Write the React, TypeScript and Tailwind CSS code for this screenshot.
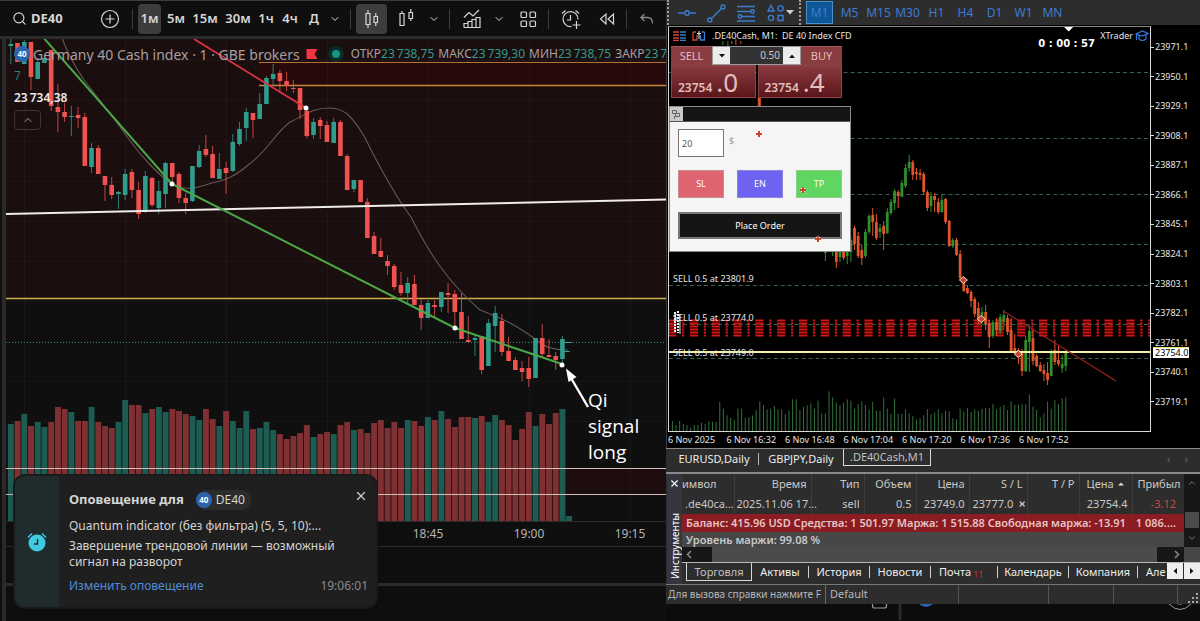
import React from "react";
import { ChevronDown, ChevronUp, Search, X } from "lucide-react";

type Candle = [number, number, number, number, number];

// [up, high, body top, body bottom, low]
const dayCandles: Candle[] = [
  [1, 38, 44, 46, 64], [0, 43, 43, 62, 62], [1, 40, 42, 64, 64], [0, 42, 42, 77, 90], [1, 58, 62, 79, 79],
  [1, 55, 58, 63, 63], [0, 50, 50, 106, 111], [0, 84, 107, 112, 132], [0, 103, 112, 117, 122], [1, 106, 116, 117, 136],
  [0, 107, 115, 118, 128], [0, 113, 117, 166, 166], [1, 143, 148, 167, 173], [0, 145, 148, 174, 174], [0, 176, 176, 185, 201],
  [0, 177, 185, 195, 199], [1, 191, 192, 194, 209], [1, 169, 174, 195, 200], [0, 169, 172, 190, 198], [0, 182, 190, 214, 219],
  [1, 171, 176, 211, 213], [0, 177, 178, 205, 207], [1, 181, 191, 208, 214], [1, 162, 163, 194, 208], [0, 163, 163, 177, 183],
  [0, 172, 174, 198, 203], [0, 193, 198, 203, 214], [1, 166, 166, 201, 202], [1, 145, 151, 167, 168], [0, 135, 149, 155, 157],
  [0, 146, 154, 178, 178], [1, 153, 169, 179, 179], [0, 162, 168, 173, 194], [1, 134, 142, 171, 172], [1, 122, 129, 144, 146],
  [1, 108, 112, 128, 141], [0, 113, 113, 120, 138], [1, 93, 104, 119, 119], [1, 76, 78, 104, 104], [1, 64, 74, 79, 86],
  [0, 70, 73, 81, 93], [0, 72, 81, 86, 91], [0, 80, 88, 89, 93], [0, 88, 88, 110, 119], [0, 108, 111, 136, 138],
  [1, 118, 122, 135, 139], [0, 117, 120, 126, 139], [0, 121, 125, 142, 142], [1, 118, 122, 143, 143], [0, 120, 122, 156, 156],
  [0, 154, 156, 190, 190], [1, 180, 180, 189, 192], [0, 180, 180, 202, 202], [0, 198, 202, 238, 238], [0, 232, 236, 254, 254],
  [0, 238, 251, 257, 257], [0, 255, 261, 266, 275], [0, 264, 266, 287, 290], [0, 272, 285, 293, 296], [1, 277, 283, 293, 304],
  [0, 275, 284, 305, 305], [0, 299, 305, 318, 330], [1, 300, 303, 318, 318], [0, 300, 305, 307, 317], [1, 292, 292, 307, 312],
  [0, 283, 293, 295, 313], [0, 290, 294, 312, 327], [0, 293, 312, 339, 339], [0, 316, 340, 342, 342], [1, 335, 338, 340, 356],
  [0, 336, 336, 370, 374], [1, 319, 323, 366, 366], [1, 306, 313, 326, 352], [0, 314, 321, 352, 356], [0, 337, 351, 361, 361],
  [0, 357, 360, 370, 370], [0, 361, 368, 372, 381], [0, 357, 368, 379, 387], [1, 338, 338, 378, 378], [0, 324, 338, 354, 357],
  [0, 339, 355, 357, 357], [0, 352, 356, 360, 370], [1, 336, 339, 359, 365],
];

const dayVolumes = [
  424, 421, 414, 426, 422, 427, 422, 407, 409, 412, 421, 421, 407, 422, 426, 428, 422, 400, 405, 405, 413, 409, 407, 412,
  409, 411, 414, 416, 420, 409, 419, 426, 411, 421, 428, 411, 429, 428, 422, 430, 434, 439, 436, 433, 425, 437, 434, 432,
  434, 425, 422, 430, 429, 433, 423, 420, 428, 422, 428, 420, 421, 426, 417, 420, 411, 419, 427, 417, 417, 418, 416, 422,
  415, 420, 425, 440, 429, 412, 426, 414, 424, 413, 409,
];

const terminalStart = 42;
const terminalCandles: Candle[] = [
  [1, 235, 240, 253, 261], [0, 230, 240, 250, 252], [1, 236, 240, 252, 256], [0, 240, 250, 262, 268], [1, 235, 245, 257, 262],
  [0, 235, 240, 258, 260], [1, 235, 240, 256, 264], [1, 236, 240, 252, 262], [0, 226, 228, 244, 250], [0, 232, 236, 256, 258],
  [0, 245, 250, 258, 265], [1, 229, 232, 256, 258], [1, 214, 216, 232, 234], [0, 208, 215, 222, 236], [0, 214, 222, 238, 240],
  [1, 224, 228, 232, 238], [0, 221, 226, 234, 250], [1, 208, 212, 233, 234], [1, 199, 202, 213, 215], [1, 189, 191, 203, 210],
  [0, 190, 192, 196, 208], [1, 180, 183, 197, 197], [1, 164, 168, 186, 188], [1, 155, 162, 168, 172], [0, 160, 162, 175, 180],
  [0, 168, 172, 174, 180], [0, 169, 173, 175, 180], [0, 172, 174, 192, 195], [0, 190, 192, 208, 211], [1, 192, 196, 206, 212],
  [0, 193, 196, 200, 212], [0, 198, 202, 212, 214], [1, 194, 200, 212, 213], [0, 198, 199, 222, 224], [0, 220, 221, 246, 247],
  [1, 238, 240, 246, 248], [0, 238, 240, 255, 256], [0, 250, 254, 278, 280], [0, 278, 280, 291, 292], [0, 285, 288, 293, 294],
  [0, 290, 292, 301, 307], [0, 297, 299, 314, 317], [0, 302, 308, 320, 324], [1, 307, 312, 320, 326], [0, 305, 312, 324, 330],
  [0, 320, 323, 337, 348], [1, 320, 322, 336, 338], [0, 318, 322, 330, 336], [1, 314, 317, 331, 334], [1, 310, 315, 322, 330],
  [0, 315, 318, 332, 335], [0, 318, 330, 352, 353], [0, 334, 348, 352, 354], [0, 348, 350, 357, 364], [0, 349, 352, 371, 376],
  [1, 336, 340, 371, 372], [1, 325, 331, 342, 372], [0, 330, 338, 361, 365], [0, 354, 356, 366, 367], [0, 362, 365, 371, 372],
  [0, 364, 370, 374, 381], [0, 362, 373, 380, 385], [1, 349, 351, 376, 376], [0, 340, 350, 362, 365], [0, 346, 360, 364, 366],
  [1, 355, 364, 368, 373], [1, 350, 352, 366, 371],
];

const terminalVolumes = [
  30, 18, 30, 21, 18, 10, 18, 18, 25, 21, 29, 28, 27, 87, 67, 47, 40, 34, 67, 67, 39, 42, 47, 63, 89, 78, 65, 67, 75, 65,
  65, 51, 61, 95, 95, 63, 73, 77, 83, 67, 91, 53, 53, 119, 101, 85, 78, 85, 95, 91, 67, 81, 89, 78, 65, 87, 61, 61, 100,
  67, 51, 97, 51, 51, 65, 53, 45, 35, 38, 47, 65, 51, 55, 65, 53, 61, 59, 38, 35, 67, 59, 69, 57, 65, 61, 67, 69, 69, 81,
  65, 73, 78, 63, 89, 78, 78, 80, 80, 110, 73, 63, 41, 53, 88, 67, 92, 81, 99, 100,
];

const prices = [
  "23971.1", "23950.1", "23929.1", "23908.1", "23887.1", "23866.1", "23845.1",
  "23824.1", "23803.1", "23782.1", "23761.1", "23740.1", "23719.1",
];
const terminalTimes = ["6 Nov 2025", "6 Nov 16:32", "6 Nov 16:48", "6 Nov 17:04", "6 Nov 17:20", "6 Nov 17:36", "6 Nov 17:52"];
const intervals = [
  { name: "5м", width: "w-6" },
  { name: "15м", width: "w-[34px]" },
  { name: "30м", width: "w-8" },
  { name: "1ч", width: "w-6" },
  { name: "4ч", width: "w-6" },
  { name: "Д", width: "w-6" },
];
const periods = ["M5", "M15", "M30", "H1", "H4", "D1", "W1", "MN"];
// thin space between the thousands
const ohlc = [
  ["ОТКР", "23\u2009738,75"],
  ["МАКС", "23\u2009739,30"],
  ["МИН", "23\u2009738,75"],
  ["ЗАКР", "23\u2009739"],
];

const Divider = () => <span className="h-5 w-px shrink-0 bg-[#3d3d3d]" />;

const ToolButton = ({ label, className = "", children }: { label: string; className?: string; children: React.ReactNode }) => (
  <button aria-label={label} className={`flex h-[30px] shrink-0 items-center justify-center rounded ${className}`}>
    {children}
  </button>
);

const LeftToolbar = () => (
  <header className="flex h-[39px] shrink-0 items-center overflow-hidden border-t border-b-3 border-t-[#3c3c3c] border-b-[#2c2c2c] bg-[#0f0f0f] text-[13px] text-[#d6d6d6]">
    <button className="ml-3 flex w-[88px] shrink-0 items-center gap-1 font-bold">
      <Search size={15} strokeWidth={1.8} />
      DE40
    </button>
    <ToolButton label="Добавить символ" className="w-5">
      <svg width="20" height="20" viewBox="0 0 20 20" fill="none" stroke="currentColor" strokeWidth="1.2">
        <circle cx="10" cy="10" r="8.5" />
        <path d="M10 5.5v9M5.5 10h9" />
      </svg>
    </ToolButton>
    <span className="w-3 shrink-0" />
    <Divider />
    <button className="ml-[5px] h-[30px] w-[23px] shrink-0 rounded bg-[#3d3d3d] font-semibold">1м</button>
    <div className="ml-[3px] flex shrink-0 font-semibold">
      {intervals.map(({ name, width }) => (
        <button key={name} className={`shrink-0 ${width}`}>
          {name}
        </button>
      ))}
    </div>
    <ToolButton label="Интервалы" className="ml-[2px] w-[14px]">
      <ChevronDown size={12} />
    </ToolButton>
    <span className="w-2 shrink-0" />
    <Divider />
    <ToolButton label="Свечи" className="ml-[5px] w-[31px] bg-[#3d3d3d]">
      <svg width="20" height="22" viewBox="0 0 20 22" fill="none" stroke="currentColor" strokeWidth="1.2">
        <path d="M4 5.5h4v11H4zM6 2v3.5M6 16.5V20M12 8.5h3.5v6H12zM13.8 5v3.5M13.8 14.5V18" />
      </svg>
    </ToolButton>
    <ToolButton label="Тип графика" className="ml-2 w-6">
      <svg width="20" height="22" viewBox="0 0 20 22" fill="none" stroke="currentColor" strokeWidth="1.2">
        <path d="M3 5.5h4v12H3zM5 3v2.5M12 4.5h3.5v6H12zM13.8 1v3.5M13.8 10.5V13" />
      </svg>
    </ToolButton>
    <ToolButton label="Ещё типы" className="ml-2 w-[14px]">
      <ChevronDown size={12} />
    </ToolButton>
    <span className="w-2 shrink-0" />
    <Divider />
    <ToolButton label="Индикаторы" className="ml-3 w-5">
      <svg width="20" height="22" viewBox="0 0 20 22" fill="none" stroke="currentColor" strokeWidth="1.2">
        <path d="M2 19.5h16v-10h-4v10M10 19.5v-6H6v6M2 19.5v-4h4M10 13.5v-2h4M2 9.5l5-5 4 3.5 6-6" />
      </svg>
    </ToolButton>
    <ToolButton label="Шаблоны" className="ml-[10px] w-[14px]">
      <ChevronDown size={12} />
    </ToolButton>
    <ToolButton label="Раскладка" className="ml-3 w-5">
      <svg width="18" height="18" viewBox="0 0 18 18" fill="none" stroke="currentColor" strokeWidth="1.2">
        <rect x="2" y="2" width="5.5" height="5.5" rx="1" />
        <rect x="11" y="2" width="5.5" height="5.5" rx="1" />
        <rect x="2" y="11" width="5.5" height="5.5" rx="1" />
        <rect x="11" y="11" width="5.5" height="5.5" rx="1" />
      </svg>
    </ToolButton>
    <span className="w-[10px] shrink-0" />
    <Divider />
    <ToolButton label="Оповещение" className="ml-3 w-5">
      <svg width="20" height="22" viewBox="0 0 20 22" fill="none" stroke="currentColor" strokeWidth="1.2">
        <path d="M10.5 18.5A7.5 7.5 0 1 1 17 11.5M9.5 7v5H6M1 5.5L4.5 2.5M14.5 2.5l3.5 3M15.5 13v8M11.5 17h8" />
      </svg>
    </ToolButton>
    <ToolButton label="Повтор" className="ml-4 w-5">
      <svg width="18" height="16" viewBox="0 0 18 16" fill="none" stroke="currentColor" strokeWidth="1.2">
        <path d="M8 3v10L2.5 8zM15.5 3v10L10 8z" />
      </svg>
    </ToolButton>
    <span className="w-[9px] shrink-0" />
    <Divider />
    <ToolButton label="Отменить" className="ml-[10px] w-5 text-[#8a8a8a]">
      <svg width="16" height="14" viewBox="0 0 16 14" fill="none" stroke="currentColor" strokeWidth="1.3">
        <path d="M5.5 2L2 5.5 5.5 9M2 5.5h6.5c3.5 0 5 2 5 6" />
      </svg>
    </ToolButton>
  </header>
);

const DayChart = () => (
  <svg className="block h-[482px] w-full" viewBox="6 39 660 482" preserveAspectRatio="none">
    <rect x="6" y="39" width="660" height="259" fill="#1b0e0f" />
    <rect x="6" y="468" width="660" height="26" fill="#1d0d0e" />
    <rect x="260" y="62" width="406" height="23" fill="#260a0b" />
    {[24, 125, 226, 327, 428, 529, 630].map((x) => (
      <path key={x} d={`M${x}.5 39V521`} stroke="#ffffff" strokeOpacity="0.03" />
    ))}
    {[60, 100, 141, 181, 221, 261, 301, 341, 381, 421].map((y) => (
      <path key={y} d={`M6 ${y}.5H666`} stroke="#ffffff" strokeOpacity="0.03" />
    ))}
    {dayVolumes.map((top, i) => (
      <rect key={i} x={7.9 + i * 6.727} y={top} width="5.9" height={521 - top} fill={dayCandles[i][0] ? "#1d5c52" : "#7f3033"} />
    ))}
    <rect x="566" y="516" width="6" height="5" fill="#1d5c52" />
    <path d="M6 468.5H666M6 494.5H666" stroke="#d3bdb9" />
    <path d="M259 62.5H666" stroke="#b5722f" />
    <path d="M259 85.5H666" stroke="#c9843c" strokeWidth="1.4" />
    <path d="M6 298.5H666" stroke="#d2b04c" strokeWidth="1.4" />
    <path d="M6 342.5H666" stroke="#3d7d74" strokeDasharray="1 2" />
    <path
      d="M62 38C68 55 76 68 84 80C100 101 116 120 128 138C142 158 160 176 172 184C186 192 200 187 212 183C226 180 236 176 248 165C266 153 276 132 290 122C304 116 312 108 328 108C346 107 354 120 364 136C380 168 396 197 411 217C420 235 430 252 439 265C452 283 466 298 480 310C500 318 512 322 535 339C545 347 552 350 568 350"
      fill="none"
      stroke="#6b5557"
      strokeWidth="1.1"
    />
    {dayCandles.map(([up, high, top, bottom, low], i) => {
      const x = 10.8 + i * 6.727;
      const color = up ? "#2f9c8c" : "#ef5350";
      return (
        <g key={i} fill={color}>
          <rect x={x - 0.5} y={high} width="1" height={low - high} opacity="0.8" />
          <rect x={x - 2.3} y={top} width="4.6" height={bottom - top} />
        </g>
      );
    })}
    <path d="M6 214L666 199.5" stroke="#f1ecec" strokeWidth="2" />
    <path d="M194 39L306 108" stroke="#d93545" strokeWidth="1.8" />
    <path d="M42 36L172 184L455 328L562 364" fill="none" stroke="#4aa845" strokeWidth="2" />
    <path d="M564 351.5h6M564 342.5h8" stroke="#2f9c8c" />
    {[[172, 184], [306, 108], [455, 328], [562, 365]].map(([x, y]) => (
      <circle key={x} cx={x} cy={y} r="2.5" fill="#fff" />
    ))}
    <path d="M588 407L571 378" stroke="#fff" strokeWidth="2.4" />
    <path d="M566 368.5L576.5 377L568.5 382z" fill="#fff" />
  </svg>
);

const SymbolBadge = () => (
  <span className="flex size-4 shrink-0 items-center justify-center rounded-full bg-[#2b63ad] text-[8px] font-bold text-white">40</span>
);

const ChartLegend = () => (
  <div className="absolute inset-x-0 top-0 overflow-hidden pt-[7px] pl-2 text-[#a89fa0]">
    <div className="flex h-4 items-center whitespace-nowrap">
      <SymbolBadge />
      <h1 className="ml-[3px] text-[14px]">Germany 40 Cash index · 1 · GBE brokers</h1>
      <svg className="ml-[6px] shrink-0" width="12" height="12" viewBox="0 0 12 12">
        <path d="M0.5 1h11L8.5 6l3 5h-11z" fill="#f23645" />
      </svg>
      <span className="ml-[10px] flex size-4 shrink-0 items-center justify-center rounded-full bg-[#0c2a26]">
        <span className="size-2 rounded-full bg-[#11967f]" />
      </span>
      <div className="ml-[7px] flex gap-1 text-[12px]">
        {ohlc.map(([name, value]) => (
          <span key={name}>
            {name}
            <span className="text-[#2f9c8c]">{value}</span>
          </span>
        ))}
      </div>
    </div>
    <p className="mt-[6px] text-[12px] leading-4 text-[#2f7f76]">7</p>
    <p className="mt-[6px] text-[12px] leading-4 font-semibold text-[#eceaea]">{"23\u2009734,38"}</p>
    <button aria-label="Свернуть" className="mt-1 flex h-5 w-[27px] items-center justify-center rounded-sm border border-[#3f3536]">
      <ChevronUp size={12} />
    </button>
  </div>
);

const AlertToast = () => (
  <section className="absolute top-[474px] left-[13px] flex h-[135px] w-[365px] overflow-hidden rounded-xl border-2 border-[#1a1a1a] bg-[#1f1f1f] text-[#d4d4d4] shadow-lg">
    <div className="flex w-11 shrink-0 items-center justify-center bg-[#1f2b2d]">
      <svg width="22" height="22" viewBox="0 0 22 22">
        <circle cx="11" cy="12" r="8.5" fill="#3ecbe0" />
        <path d="M2 6.5L6 2.5M20 6.5L16 2.5" stroke="#3ecbe0" strokeWidth="1.5" />
        <path d="M11.5 8v5H8" fill="none" stroke="#1f2b2d" strokeWidth="1.4" />
      </svg>
    </div>
    <div className="flex min-w-0 flex-1 flex-col pt-[14px] pr-2 pl-[10px] text-[12px]">
      <div className="flex h-5 items-center">
        <h2 className="text-[13px] font-bold">Оповещение для</h2>
        <span className="ml-3 flex h-5 items-center gap-1 rounded-full bg-[#2c2c2c] pr-[6px]">
          <SymbolBadge />
          DE40
        </span>
        <button aria-label="Закрыть" className="mb-2 ml-auto">
          <X size={14} />
        </button>
      </div>
      <p className="mt-2 leading-4 whitespace-nowrap">Quantum indicator (без фильтра) (5, 5, 10):...</p>
      <p className="mt-1 leading-4">
        Завершение трендовой линии — возможный сигнал на разворот
      </p>
      <div className="mt-2 flex justify-between leading-4">
        <a href="#alert" className="text-[#4f8bd8]">Изменить оповещение</a>
        <time className="text-[#8a8a8a]">19:06:01</time>
      </div>
    </div>
  </section>
);

const LeftPanel = () => (
  <main className="relative flex min-h-screen w-[55.5%] shrink-0 flex-col bg-[#0f0f0f]">
    <LeftToolbar />
    <div className="ml-[2px] flex flex-1 flex-col border-l-4 border-[#2a2a2a]">
      <div className="relative overflow-hidden">
        <DayChart />
        <ChartLegend />
        <p className="absolute top-[348px] left-[582px] w-16 font-['Open_Sans',sans-serif] text-[19px] leading-[26px] font-medium text-white">
          Qi signal long
        </p>
      </div>
      <div className="flex h-[26px] items-center justify-end gap-[61px] border-y border-[#2b2b2b] pr-4 text-[12px] text-[#b4b4b4]">
        {["18:45", "19:00", "19:15"].map((time) => (
          <time key={time} className="w-10 text-center">{time}</time>
        ))}
      </div>
      <div className="h-[39px] border-b-3 border-[#2c2c2c]" />
      <div className="flex-1" />
    </div>
    <AlertToast />
  </main>
);

const TerminalToolbar = () => (
  <header className="flex h-[25px] shrink-0 items-center overflow-hidden bg-[#2d2d2d] text-[12px] text-[#3d7bd0]">
    <span className="ml-px h-full w-px shrink-0 border-l-2 border-dotted border-[#a0a0a0]" />
    <div className="flex w-[130px] shrink-0 items-center gap-[11px] pl-[9px]">
      <button aria-label="Горизонтальная линия">
        <svg width="18" height="20" viewBox="0 0 18 20" fill="none" stroke="currentColor" strokeWidth="1.4">
          <path d="M0 10h6M12 10h6" />
          <circle cx="9" cy="10" r="2.2" />
        </svg>
      </button>
      <button aria-label="Трендовая линия">
        <svg width="19" height="20" viewBox="0 0 19 20" fill="none" stroke="currentColor" strokeWidth="1.4">
          <path d="M4 16L15 5" />
          <circle cx="2.8" cy="17" r="2" />
          <circle cx="16" cy="4" r="2" />
        </svg>
      </button>
      <button aria-label="Уровни Фибоначчи">
        <svg width="19" height="20" viewBox="0 0 19 20" fill="none" stroke="currentColor" strokeWidth="1.4">
          <path d="M0 3.5h18M0 8.5h14M5 13.5h13M0 18h18" />
          <circle cx="15.5" cy="8.5" r="1.7" />
          <circle cx="3" cy="13.5" r="1.7" />
        </svg>
      </button>
      <button aria-label="Фигуры" className="flex items-center gap-px">
        <svg width="18" height="20" viewBox="0 0 18 20" fill="none" stroke="currentColor" strokeWidth="1.4">
          <path d="M1 8l3-5.5L7 8zM11 12.5h5v5h-5z" />
          <circle cx="13.5" cy="5.5" r="2.6" />
          <circle cx="4" cy="15" r="2.6" />
        </svg>
        <svg width="8" height="5" viewBox="0 0 8 5">
          <path d="M0 0h8L4 4.5z" fill="#d0d0d0" />
        </svg>
      </button>
    </div>
    <span className="h-full w-px shrink-0 border-l-2 border-dotted border-[#a0a0a0]" />
    <button className="ml-[5px] h-[23px] w-[27px] shrink-0 border border-[#4a90c8] bg-[#0d5796]">M1</button>
    <div className="flex shrink-0 pl-[2px]">
      {periods.map((item) => (
        <button key={item} className="w-[29px] text-center">{item}</button>
      ))}
    </div>
  </header>
);

const TerminalSvg = () => (
  <svg className="block h-full w-full" viewBox="669 27 482 404" preserveAspectRatio="none">
    {[72, 138, 194, 244, 285, 324, 358].map((y) => (
      <path key={y} d={`M669 ${y}.5H1151`} stroke="#39634f" strokeDasharray="4 3" />
    ))}
    {[320, 323, 326, 329, 332, 335].map((y) => (
      <path key={y} d={`M668 ${y}.5H1151`} stroke="#d81414" strokeWidth="2.2" strokeDasharray="8.3 5.7 2.3 5.57" />
    ))}
    {terminalVolumes.map((height, i) => (
      <rect key={i} x={671.9 + i * 3.65} y={431 - height / 3} width="1" height={height / 3} fill="#34703a" />
    ))}
    {terminalCandles.map(([up, high, top, bottom, low], i) => {
      const x = 672.4 + (i + terminalStart) * 3.65;
      return (
        <g key={i} fill={up ? "#2f8f2c" : "#e2552a"}>
          <rect x={x - 0.5} y={high} width="1" height={low - high} />
          <rect x={x - 1.4} y={top} width="2.8" height={bottom - top} />
        </g>
      );
    })}
    <path d="M669 352H1151" stroke="#f4f0a0" strokeWidth="2" />
    <path d="M1004 311L1117 381" stroke="#9c2020" strokeWidth="1.2" />
    {[[964, 280], [982, 319], [1019, 354]].map(([x, y]) => (
      <path key={x} d={`M${x - 4} ${y}l4 -3.5l4 3.5l-4 3.5z`} fill="#c7452c" stroke="#f2d9cf" />
    ))}
    <path d="M1065 27h9l-4.5 4.5z" fill="#fff" />
    <path d="M723 45v-4M728 46v-5" stroke="#2f8f2c" />
    <path d="M732 44v-3M736 45v-6M741 44v-3" stroke="#e2552a" />
    <rect x="758" y="98" width="3" height="8" fill="#e2552a" />
    <path d="M675 312v20M678 311v22" stroke="#f0f0f0" strokeWidth="2" strokeDasharray="2 1" />
    <path d="M680 314v20" stroke="#f0f0f0" />
  </svg>
);

const QuickTrade = () => (
  <div className="absolute top-[19px] left-[2px] w-[171px] text-[#e3bcbc]">
    <div className="flex h-[19px]">
      <button className="w-[41px] border-t border-[#a25a5e] bg-[#8a3c40] text-[11px] leading-4">SELL</button>
      <div className="flex h-[19px] flex-1 items-stretch border border-[#9a9a9a] bg-[#333]">
        <button aria-label="Уменьшить" className="flex w-[17px] items-center justify-center bg-[#ececec]">
          <svg width="6" height="4" viewBox="0 0 6 4"><path d="M0 0h6L3 3.5z" fill="#111" /></svg>
        </button>
        <input aria-label="Объем" defaultValue="0.50" className="w-0 min-w-0 flex-1 pr-[3px] text-right text-[10px] text-[#c9c9c9]" />
        <button aria-label="Увеличить" className="flex w-[17px] items-center justify-center bg-[#ececec]">
          <svg width="6" height="4" viewBox="0 0 6 4"><path d="M0 4h6L3 0.5z" fill="#111" /></svg>
        </button>
      </div>
      <button className="w-[41px] border-t border-[#a25a5e] bg-[#8a3c40] text-[11px] leading-4">BUY</button>
    </div>
    <div className="flex h-[33px] gap-[2px]">
      {["0", "4"].map((digit) => (
        <button key={digit} className="flex flex-1 items-baseline border border-[#8d4448] bg-linear-to-b from-[#8a3a3f] to-[#5b161a] pl-[6px] leading-none">
          <span className="text-[12px] font-semibold">23754</span>
          <span className="ml-1 text-[26px] leading-8">.{digit}</span>
        </button>
      ))}
    </div>
  </div>
);

const OrderForm = () => (
  <form className="absolute top-[79px] left-0 w-[182px] border border-[#8a8a8a] bg-[#f5f5f5] font-['Noto_Sans',sans-serif] text-[9px]">
    <div className="h-[15px] border-b border-[#555] bg-[#151515]">
      <svg width="13" height="14" viewBox="0 0 13 14">
        <rect x="0" y="0" width="13" height="14" fill="#c9c9c9" />
        <path d="M2.5 3.500h4v3h-4zM5.500 6.500h4v3h-4zM4.500 9v3" fill="none" stroke="#666" />
      </svg>
    </div>
    <div className="px-2 pt-[7px] pb-3">
      <label className="flex items-start gap-[5px] text-[#9a9a9a]">
        <input aria-label="Риск" defaultValue="20" className="h-7 w-[46px] border border-[#777] bg-white pl-[3px] text-[#555]" />
        <span className="pt-[5px]">$</span>
      </label>
      <div className="mt-[13px] flex justify-between text-white">
        <button type="button" className="h-7 w-[46px] border border-[#c98a90] bg-[#dd6470]">SL</button>
        <button type="button" className="h-7 w-[46px] border border-[#8a86d8] bg-[#6e62f0]">EN</button>
        <button type="button" className="h-7 w-[46px] border border-[#8ad08a] bg-[#5fd562]">TP</button>
      </div>
      <button type="button" className="mt-[14px] h-[27px] w-full border-2 border-[#777] bg-[#151515] text-white">Place Order</button>
    </div>
  </form>
);

const markers = ["top-[103px] left-[86px]", "top-[159px] left-[130px]", "top-[208px] left-[145px]"];

const TerminalChart = () => (
  <section className="flex h-[423px] flex-col border-l border-[#3a3a3a] bg-black pt-px pl-px font-['Noto_Sans',sans-serif] text-[9px] text-[#e6e6e6]">
    <div className="flex h-[406px]">
      <div className="relative min-w-0 flex-1 border border-[#d8d8d8] border-t-[#8c8c8c]">
        <TerminalSvg />
        <div className="absolute inset-x-0 top-[3px] flex items-center pr-px pl-1 leading-3 whitespace-nowrap">
          <svg width="33" height="10" viewBox="0 0 33 10" fill="none">
            <path d="M0 1h6M0 4h6M0 7h6M0 9.5h6" stroke="#d0443c" strokeWidth="1.5" />
            <path d="M7 1h6M7 4h6M7 7h6M7 9.5h6" stroke="#3d7bd0" strokeWidth="1.5" />
            <path d="M20 1v8h4V4M20 1h3" stroke="#d0443c" strokeWidth="1.3" />
            <path d="M31.5 1v8h-4V4M31.5 1h-3" stroke="#3d7bd0" strokeWidth="1.3" />
            <path d="M24 2.5h4M26 0v8" stroke="#eee" />
          </svg>
          <h2 className="ml-[6px]">.DE40Cash, M1:&nbsp; DE 40 Index CFD</h2>
          <span className="mr-[2px] ml-auto">XTrader</span>
          <svg width="14" height="12" viewBox="0 0 14 12" fill="none" stroke="#2f7ae0" strokeWidth="1.2">
            <path d="M1 4l6.5-3L13 3.5 7 6zM4 5v4c2 2 5 1.5 7 0V4.5M1.5 4v6" />
          </svg>
        </div>
        <p className="absolute top-[9px] right-[55px] font-['DejaVu_Sans',sans-serif] text-[10px] font-bold whitespace-pre text-white">0 : 00 : 57</p>
        <p className="absolute top-[246px] left-1 leading-3">SELL 0.5 at 23801.9</p>
        <p className="absolute top-[285px] left-1 leading-3">SELL 0.5 at 23774.0</p>
        <p className="absolute top-[320px] left-1 leading-3">SELL 0.5 at 23749.0</p>
        <QuickTrade />
        <OrderForm />
        {markers.map((place) => (
          <svg key={place} className={`absolute ${place}`} width="8" height="8" viewBox="0 0 8 8">
            <path d="M4 0.5L7.5 4 4 7.5 0.5 4z" fill="#fff4ea" />
            <path d="M4 1v6M1 4h6" stroke="#c7452c" strokeWidth="2" />
          </svg>
        ))}
      </div>
      <div className="relative flex w-[49px] shrink-0 flex-col justify-between pt-[15px] pb-6">
        {prices.map((price) => (
          <span key={price} className="flex items-center leading-3">
            <span className="mr-px h-px w-[3px] bg-[#d8d8d8]" />
            {price}
          </span>
        ))}
        <span className="absolute top-[321px] left-[2px] w-9 border-t border-[#e8e27a] bg-white pl-[2px] leading-[10px] text-black">23754.0</span>
      </div>
    </div>
    <div className="flex pt-[2px] leading-3">
      {terminalTimes.map((time) => (
        <time key={time} className="w-[11%] shrink-0 whitespace-nowrap">{time}</time>
      ))}
    </div>
  </section>
);

const ChartTabs = () => (
  <nav className="flex h-6 shrink-0 items-start border-t border-[#8a8a8a] bg-[#2d2d2d] pl-[2px] text-[11px] leading-5 text-[#ececec]">
    <button className="w-[90px] pl-[2px]">EURUSD,Daily</button>
    <span className="mt-1 h-3 w-px bg-[#b5b5b5]" />
    <button className="w-[84px]">GBPJPY,Daily</button>
    <button className="h-[17px] w-[88px] border border-t-0 border-[#d8d8d8] leading-4 text-[#c0c0c0]">.DE40Cash,M1</button>
    <span className="ml-auto pr-3 text-[#666]">‹&nbsp;&nbsp;&nbsp;&nbsp;&nbsp;›</span>
  </nav>
);

const headCell = "border-r border-[#3d3d3d] px-1 text-right font-normal";
const bodyCell = "border-r border-[#3d3d3d] px-1 text-right";

const TradeTable = () => (
  <table className="w-full table-fixed border-collapse text-[11px] whitespace-nowrap text-[#c9c9c9]">
    <colgroup>
      <col className="w-[52px]" />
      <col className="w-[77px]" />
      <col className="w-[53px]" />
      <col className="w-[52px]" />
      <col className="w-[53px]" />
      <col className="w-[58px]" />
      <col className="w-[52px]" />
      <col className="w-[53px]" />
      <col />
    </colgroup>
    <thead>
      <tr className="h-5">
        <th className="border-r border-[#3d3d3d] text-left font-normal">имвол</th>
        <th className={headCell}>Время</th>
        <th className={headCell}>Тип</th>
        <th className={headCell}>Объем</th>
        <th className={headCell}>Цена</th>
        <th className={headCell}>S / L</th>
        <th className={headCell}>T / P</th>
        <th className="border-r border-[#3d3d3d] px-1 text-left font-normal">
          <span className="flex items-center justify-between pr-1 pl-[3px]">
            Цена
            <svg width="6" height="4" viewBox="0 0 6 4"><path d="M0 3.5h6L3 0.5z" fill="#ddd" /></svg>
          </span>
        </th>
        <th className="overflow-hidden pl-[5px] text-left font-normal">Прибыл</th>
      </tr>
    </thead>
    <tbody>
      <tr className="h-5">
        <td className="border-r border-[#3d3d3d] pl-[3px]">.de40ca...</td>
        <td className="border-r border-[#3d3d3d] pl-[2px] text-left">2025.11.06 17...</td>
        <td className={bodyCell}>sell</td>
        <td className={bodyCell}>0.5</td>
        <td className={bodyCell}>23749.0</td>
        <td className="border-r border-[#3d3d3d] pl-[3px]">
          <span className="flex items-center gap-[5px]">
            23777.0
            <X size={10} strokeWidth={4} />
          </span>
        </td>
        <td className={bodyCell} />
        <td className={bodyCell}>23754.4</td>
        <td className="pr-2 text-right text-[#d0453f]">-3.12</td>
      </tr>
      <tr className="h-[18px] bg-[#8a1c22] font-semibold text-[#e8c3c3]">
        <td colSpan={8} className="pl-1">
          Баланс: 415.96 USD Средства: 1 501.97 Маржа: 1 515.88 Свободная маржа: -13.91
        </td>
        <td className="pr-2">
          <span className="flex justify-end">1 086....</span>
        </td>
      </tr>
      <tr className="h-[15px] bg-[#474747] font-semibold">
        <td colSpan={9} className="pl-1 leading-[15px]">Уровень маржи: 99.08 %</td>
      </tr>
    </tbody>
  </table>
);

const Chevron = ({ d }: { d: string }) => (
  <svg width="6" height="9" viewBox="0 0 6 9" fill="none" stroke="currentColor" strokeWidth="1.5">
    <path d={d} />
  </svg>
);

const Toolbox = () => (
  <section className="flex border-t-2 border-[#8a8a8a] bg-[#2d2d2d]">
    <aside className="ml-px flex w-[15px] shrink-0 flex-col items-center bg-[#34353f] pt-1 text-white">
      <button aria-label="Закрыть панель">
        <X size={11} strokeWidth={2.5} />
      </button>
      <span className="mt-6 rotate-180 text-[10px] leading-[14px] whitespace-nowrap [writing-mode:vertical-rl]">Инструменты</span>
    </aside>
    <div className="min-w-0 flex-1">
      <div className="flex">
        <div className="min-w-0 flex-1 overflow-hidden">
          <TradeTable />
          <div className="flex h-[15px] bg-[#171717] text-[#8a8a8a]">
            <span className="flex w-[30px] items-center pl-1"><Chevron d="M5 1L1.5 4.5 5 8" /></span>
            <span className="flex-1 bg-[#4b4b4b]" />
            <span className="flex w-[27px] items-center justify-end pr-1"><Chevron d="M1 1l3.5 3.5L1 8" /></span>
          </div>
        </div>
        <div className="flex w-4 shrink-0 flex-col items-center justify-between bg-[#171717] pt-1 text-[#8a8a8a]">
          <ChevronUp size={10} />
          <span className="mt-5 h-4 w-[14px] bg-[#4b4b4b]" />
          <ChevronDown size={10} />
          <span className="h-[15px] w-full bg-[#474747]" />
        </div>
      </div>
      <nav className="flex h-[22px] items-start overflow-hidden border-t border-[#b8b8b8] text-[11px] leading-[18px] whitespace-nowrap text-[#ececec]">
        <button className="ml-1 h-[18px] w-[66px] shrink-0 border border-t-0 border-[#d8d8d8] leading-4 text-[#c0c0c0]">Торговля</button>
        <button className="w-[56px] shrink-0">Активы</button>
        <span className="mt-[3px] h-3 w-px shrink-0 bg-[#d0d0d0]" />
        <button className="w-[60px] shrink-0">История</button>
        <span className="mt-[3px] h-3 w-px shrink-0 bg-[#d0d0d0]" />
        <button className="w-[60px] shrink-0">Новости</button>
        <span className="mt-[3px] h-3 w-px shrink-0 bg-[#d0d0d0]" />
        <button className="w-[66px] shrink-0 pl-2 text-left">
          Почта<sub className="ml-[2px] text-[9px] text-[#c03030]">11</sub>
        </button>
        <span className="mt-[3px] h-3 w-px shrink-0 bg-[#d0d0d0]" />
        <button className="w-[70px] shrink-0">Календарь</button>
        <span className="mt-[3px] h-3 w-px shrink-0 bg-[#d0d0d0]" />
        <button className="w-[68px] shrink-0">Компания</button>
        <span className="mt-[3px] h-3 w-px shrink-0 bg-[#d0d0d0]" />
        <button className="min-w-0 flex-1 pl-2 text-left">Але</button>
        <button aria-label="Назад" className="flex h-4 w-4 shrink-0 items-center justify-center bg-[#efefef]">
          <svg width="4" height="6" viewBox="0 0 4 6"><path d="M4 0v6L0.5 3z" fill="#111" /></svg>
        </button>
        <button aria-label="Вперёд" className="ml-px flex h-4 w-4 shrink-0 items-center justify-center bg-[#efefef]">
          <svg width="4" height="6" viewBox="0 0 4 6"><path d="M0 0v6L3.5 3z" fill="#111" /></svg>
        </button>
      </nav>
    </div>
  </section>
);

const StatusBar = () => (
  <footer className="flex h-5 shrink-0 items-stretch border-t border-[#777] bg-[#2d2d2d] text-[11px] leading-[18px] whitespace-nowrap text-[#b8b8b8]">
    <span className="w-[160px] shrink-0 overflow-hidden border-r border-[#6a6a6a] pl-[2px] text-[10px]">Для вызова справки нажмите F</span>
    <span className="w-[133px] border-r border-[#555] pl-1">Default</span>
    <span className="w-[90px] border-r border-[#555]" />
    <span className="w-[65px] border-r border-[#555]" />
    <span className="w-[64px] border-r border-[#555]" />
    <svg className="mt-auto ml-auto" width="12" height="12" viewBox="0 0 12 12" fill="#a8a8a8">
      <path d="M8 1h2v2H8zM8 5h2v2H8zM4 5h2v2H4zM8 9h2v2H8zM4 9h2v2H4zM0 9h2v2H0z" />
    </svg>
  </footer>
);

const RightPanel = () => (
  <aside className="flex min-w-0 flex-1 flex-col bg-[#0c0c0c]">
    <TerminalToolbar />
    <TerminalChart />
    <ChartTabs />
    <Toolbox />
    <StatusBar />
    <div className="flex flex-1 items-start text-[#9a9a9a]">
      <svg className="ml-[205px]" width="64" height="16" viewBox="0 0 64 16" fill="none">
        <path d="M1.5 0v2q0 2 2 2h10q2 0 2-2V0" stroke="currentColor" strokeWidth="1.2" />
        <path d="M29 0v16" stroke="#2a2a2a" strokeWidth="3" />
        <path d="M48 0q7 6 14 0z" fill="#2b63ad" />
      </svg>
      <svg className="mr-2 ml-auto" width="24" height="8" viewBox="0 0 24 8" fill="none" stroke="currentColor">
        <path d="M1 0q11 11 22 0M10 0h4" />
      </svg>
    </div>
  </aside>
);

const App = () => (
  <div className="flex min-h-screen overflow-hidden bg-black font-['Noto_Sans','Open_Sans',sans-serif]">
    <LeftPanel />
    <RightPanel />
  </div>
);

export default App;
